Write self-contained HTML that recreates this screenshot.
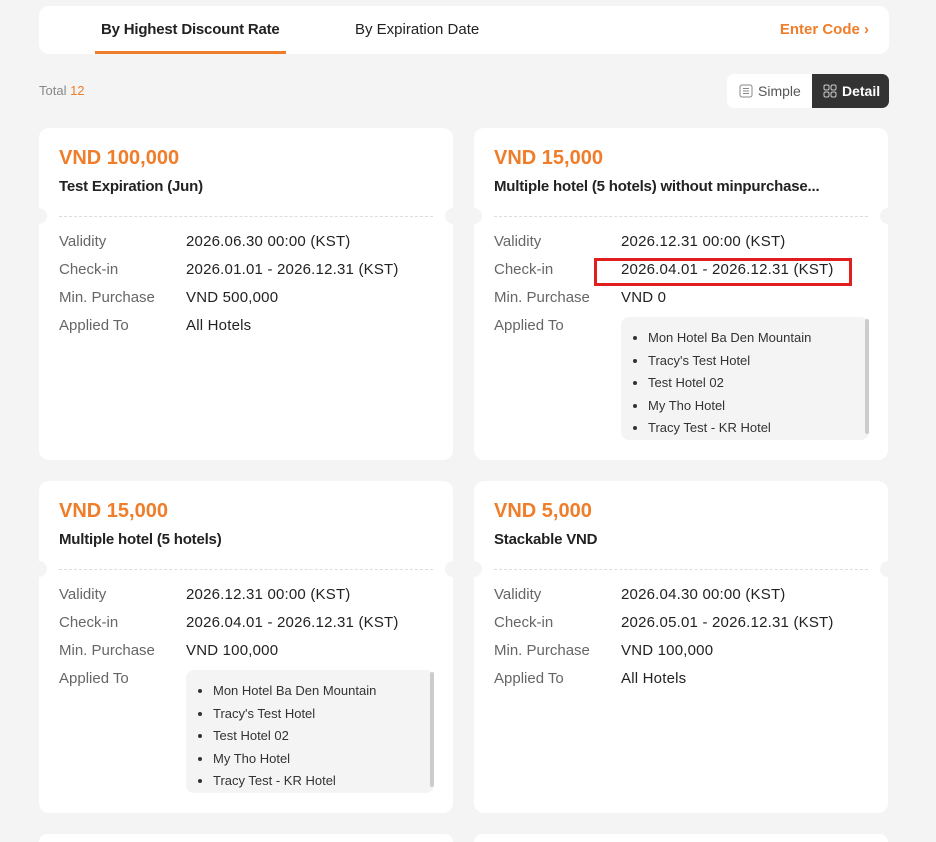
<!DOCTYPE html>
<html><head><meta charset="utf-8"><style>
*{box-sizing:border-box;margin:0;padding:0}
html,body{width:936px;height:842px;overflow:hidden}
body{background:#f4f4f4;font-family:"Liberation Sans",Arial,sans-serif;position:relative;color:#222}
.tabs{position:absolute;left:39px;top:6px;width:850px;height:48px;background:#fff;border-radius:10px}
.tab{position:absolute;top:15px;font-size:15px}
.t1{left:62px;font-weight:bold;letter-spacing:-0.2px}
.ul{position:absolute;left:56px;top:45px;width:191px;height:3px;background:#ef7d2a}
.t2{left:316px;color:#222}
.code{position:absolute;right:20px;top:15px;color:#ef7d2a;font-size:15px;font-weight:bold}
.total{position:absolute;left:39px;top:83px;font-size:13px;color:#888}
.total span{color:#ef7d2a}
.tog{position:absolute;left:727px;top:74px;width:162px;height:34px;border-radius:7px;background:#fff;overflow:hidden;font-size:14px}
.tog .s{position:absolute;left:12px;top:9px;color:#555}
.tog .d{position:absolute;left:85px;top:0;width:77px;height:34px;background:#333;color:#fff;font-weight:bold;padding:9px 0 0 11px}
.card{position:absolute;width:414px;height:332px;background:#fff;border-radius:10px}
.card:before,.card:after{content:"";position:absolute;top:80px;width:16px;height:16px;border-radius:50%;background:#f4f4f4}
.card:before{left:-8px}.card:after{right:-8px}
.amt{position:absolute;left:20px;top:19px;color:#ef7d2a;font-size:20px;font-weight:bold}
.nm{position:absolute;left:20px;top:50px;font-size:15px;font-weight:bold;color:#222;letter-spacing:-0.2px}
.dash{position:absolute;left:20px;right:20px;top:88px;border-top:1px dashed #ddd}
.row{position:absolute;left:20px;font-size:15px;color:#666}
.row b{position:absolute;left:127px;top:0;font-weight:normal;color:#222;white-space:nowrap;letter-spacing:0.2px}
.list{position:absolute;left:147px;top:189px;width:248px;height:123px;background:#f4f4f4;border-radius:8px;padding:10px 0 0 27px;font-size:13px;color:#333}
.list li{height:22.5px;line-height:22.5px}
.list:after{content:"";position:absolute;right:0;top:2px;width:4px;height:115px;background:#ccc;border-radius:2px}
.red{position:absolute;left:594px;top:258px;width:258px;height:28px;border:3px solid #e01e1e}
</style></head><body>
<div class="tabs"><div class="tab t1">By Highest Discount Rate</div><div class="ul"></div><div class="tab t2">By Expiration Date</div><div class="code">Enter Code ›</div></div>
<div class="total">Total <span>12</span></div>
<div class="tog"><div class="s"><svg width="14" height="14" viewBox="0 0 14 14" style="vertical-align:-2px;margin-right:5px"><rect x="1" y="1" width="12" height="12" rx="2" fill="none" stroke="#888"/><path d="M4 4.5h6M4 7h6M4 9.5h6" stroke="#888"/></svg>Simple</div><div class="d"><svg width="14" height="14" viewBox="0 0 14 14" style="vertical-align:-2px;margin-right:5px"><g fill="none" stroke="#ccc"><rect x="1" y="1" width="5" height="5" rx="1.5"/><rect x="8" y="1" width="5" height="5" rx="1.5"/><rect x="1" y="8" width="5" height="5" rx="1.5"/><rect x="8" y="8" width="5" height="5" rx="1.5"/></g></svg>Detail</div></div>

<div class="card" style="left:39px;top:128px">
<div class="amt">VND 100,000</div><div class="nm">Test Expiration (Jun)</div><div class="dash"></div>
<div class="row" style="top:105px">Validity<b>2026.06.30 00:00 (KST)</b></div>
<div class="row" style="top:133px">Check-in<b>2026.01.01 - 2026.12.31 (KST)</b></div>
<div class="row" style="top:161px">Min. Purchase<b>VND 500,000</b></div>
<div class="row" style="top:189px">Applied To<b>All Hotels</b></div>
</div>
<div class="card" style="left:474px;top:128px">
<div class="amt">VND 15,000</div><div class="nm">Multiple hotel (5 hotels) without minpurchase...</div><div class="dash"></div>
<div class="row" style="top:105px">Validity<b>2026.12.31 00:00 (KST)</b></div>
<div class="row" style="top:133px">Check-in<b>2026.04.01 - 2026.12.31 (KST)</b></div>
<div class="row" style="top:161px">Min. Purchase<b>VND 0</b></div>
<div class="row" style="top:189px">Applied To</div>
<ul class="list"><li>Mon Hotel Ba Den Mountain</li><li>Tracy's Test Hotel</li><li>Test Hotel 02</li><li>My Tho Hotel</li><li>Tracy Test - KR Hotel</li></ul>
</div>
<div class="card" style="left:39px;top:481px">
<div class="amt">VND 15,000</div><div class="nm">Multiple hotel (5 hotels)</div><div class="dash"></div>
<div class="row" style="top:105px">Validity<b>2026.12.31 00:00 (KST)</b></div>
<div class="row" style="top:133px">Check-in<b>2026.04.01 - 2026.12.31 (KST)</b></div>
<div class="row" style="top:161px">Min. Purchase<b>VND 100,000</b></div>
<div class="row" style="top:189px">Applied To</div>
<ul class="list"><li>Mon Hotel Ba Den Mountain</li><li>Tracy's Test Hotel</li><li>Test Hotel 02</li><li>My Tho Hotel</li><li>Tracy Test - KR Hotel</li></ul>
</div>
<div class="card" style="left:474px;top:481px">
<div class="amt">VND 5,000</div><div class="nm">Stackable VND</div><div class="dash"></div>
<div class="row" style="top:105px">Validity<b>2026.04.30 00:00 (KST)</b></div>
<div class="row" style="top:133px">Check-in<b>2026.05.01 - 2026.12.31 (KST)</b></div>
<div class="row" style="top:161px">Min. Purchase<b>VND 100,000</b></div>
<div class="row" style="top:189px">Applied To<b>All Hotels</b></div>
</div>
<div class="card" style="left:39px;top:834px;height:8px;border-radius:10px 10px 0 0"></div>
<div class="card" style="left:474px;top:834px;height:8px;border-radius:10px 10px 0 0"></div>
<div class="red"></div>
</body></html>
